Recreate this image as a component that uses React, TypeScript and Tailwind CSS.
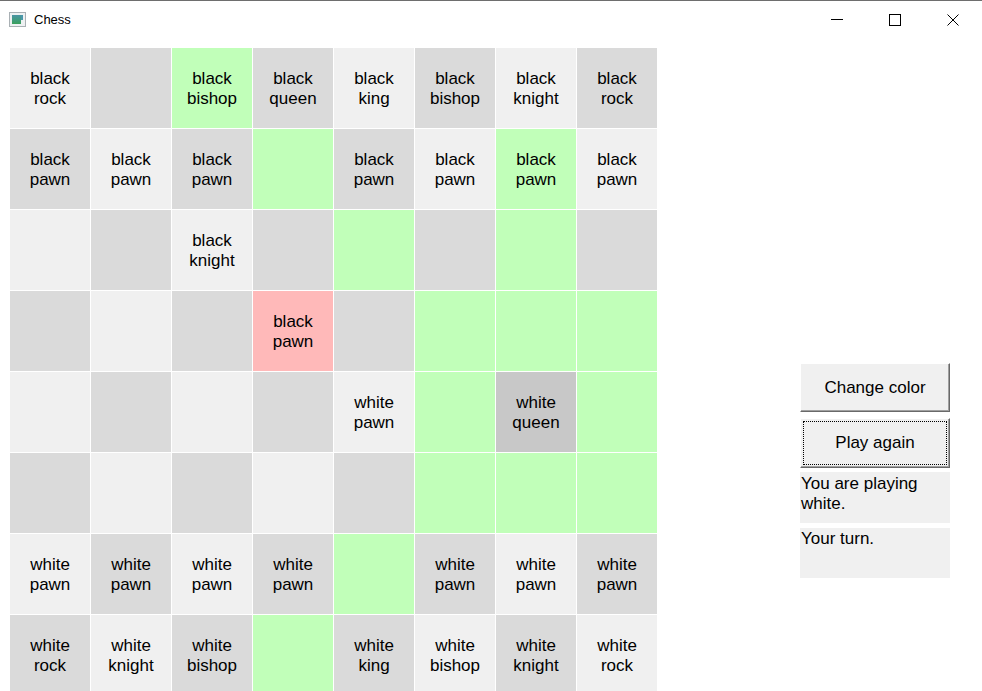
const L = 'bg-[#f0f0f0]';
const D = 'bg-[#dadada]';
const G = 'bg-[#c1ffb9]';
const R = 'bg-[#ffb9b9]';
const S = 'bg-[#c8c8c8]';

type Cell = { text?: string; color?: string };

// board content, row by row; color overrides the checker pattern
const board: Cell[][] = [
	[
		{ text: 'black rock' },
		{},
		{ text: 'black bishop', color: G },
		{ text: 'black queen' },
		{ text: 'black king' },
		{ text: 'black bishop' },
		{ text: 'black knight' },
		{ text: 'black rock' },
	],
	[
		{ text: 'black pawn' },
		{ text: 'black pawn' },
		{ text: 'black pawn' },
		{ color: G },
		{ text: 'black pawn' },
		{ text: 'black pawn' },
		{ text: 'black pawn', color: G },
		{ text: 'black pawn' },
	],
	[{}, {}, { text: 'black knight' }, {}, { color: G }, {}, { color: G }, {}],
	[{}, {}, {}, { text: 'black pawn', color: R }, {}, { color: G }, { color: G }, { color: G }],
	[{}, {}, {}, {}, { text: 'white pawn' }, { color: G }, { text: 'white queen', color: S }, { color: G }],
	[{}, {}, {}, {}, {}, { color: G }, { color: G }, { color: G }],
	[
		{ text: 'white pawn' },
		{ text: 'white pawn' },
		{ text: 'white pawn' },
		{ text: 'white pawn' },
		{ color: G },
		{ text: 'white pawn' },
		{ text: 'white pawn' },
		{ text: 'white pawn' },
	],
	[
		{ text: 'white rock' },
		{ text: 'white knight' },
		{ text: 'white bishop' },
		{ color: G },
		{ text: 'white king' },
		{ text: 'white bishop' },
		{ text: 'white knight' },
		{ text: 'white rock' },
	],
];

const font = { fontFamily: '"Liberation Sans", Arial, sans-serif' };

const TitleBar = () => (
	<div className="h-[38px] border-t border-[#6e6e6e] flex items-center bg-white">
		<div className="ml-[9px] w-[17px] h-[15px] border border-[#a9b0b4] bg-[#eef1f2] flex items-center p-[2px]">
			<div className="w-[9px] h-full bg-gradient-to-b from-[#4a94a4] to-[#3aa05a]" />
			<div className="ml-auto w-[2px] h-[5px] self-start bg-[#4a96aa]" />
		</div>
		<span className="ml-[8px] text-[13px] text-black">Chess</span>
		<div className="ml-auto flex items-center h-full">
			<div className="w-[58px] h-full flex items-center justify-center">
				<div className="w-[12px] h-px bg-black" />
			</div>
			<div className="w-[58px] h-full flex items-center justify-center">
				<div className="w-[12px] h-[12px] border border-black" />
			</div>
			<div className="w-[58px] h-full flex items-center justify-center">
				<svg width="12" height="12" viewBox="0 0 12 12">
					<path d="M0.5 0.5 L11.5 11.5 M11.5 0.5 L0.5 11.5" stroke="black" strokeWidth="1" />
				</svg>
			</div>
		</div>
	</div>
);

const Board = () => (
	<div className="grid grid-cols-[repeat(8,80px)] auto-rows-[80px] gap-px bg-white">
		{board.map((row, r) =>
			row.map((cell, c) => {
				const bg = cell.color ?? ((r + c) % 2 === 0 ? L : D);
				const words = cell.text ? cell.text.split(' ') : [];
				return (
					<div
						key={`${r}-${c}`}
						className={`${bg} flex flex-col items-center justify-center pt-[2px] text-[17px] leading-[20px] text-black`}
					>
						{words.map((w) => (
							<span key={w}>{w}</span>
						))}
					</div>
				);
			})
		)}
	</div>
);

const App = () => {
	return (
		<div className="w-[982px] h-[691px] overflow-hidden bg-white" style={font}>
			<TitleBar />
			<div className="flex pl-[10px] pt-[10px]">
				<Board />
				<div className="ml-[143px] mt-[315px] w-[150px] flex flex-col text-[17px] leading-[20px] text-black">
					<button className="h-[49px] bg-[#f0f0f0] border border-t-white border-l-white border-r-[#696969] border-b-[#696969] shadow-[inset_-1px_-1px_0_#a0a0a0]">
						Change color
					</button>
					<button className="mt-[6px] h-[50px] bg-[#f0f0f0] border border-t-white border-l-white border-r-[#696969] border-b-[#696969] shadow-[inset_-1px_-1px_0_#a0a0a0] p-[2px]">
						<div className="h-full border border-dotted border-black flex items-center justify-center">
							Play again
						</div>
					</button>
					<div className="mt-[4px] h-[51px] bg-[#f0f0f0] px-px pt-[2px]">You are playing white.</div>
					<div className="mt-[5px] h-[50px] bg-[#f0f0f0] px-px pt-px">Your turn.</div>
				</div>
			</div>
		</div>
	);
};

export default App;
